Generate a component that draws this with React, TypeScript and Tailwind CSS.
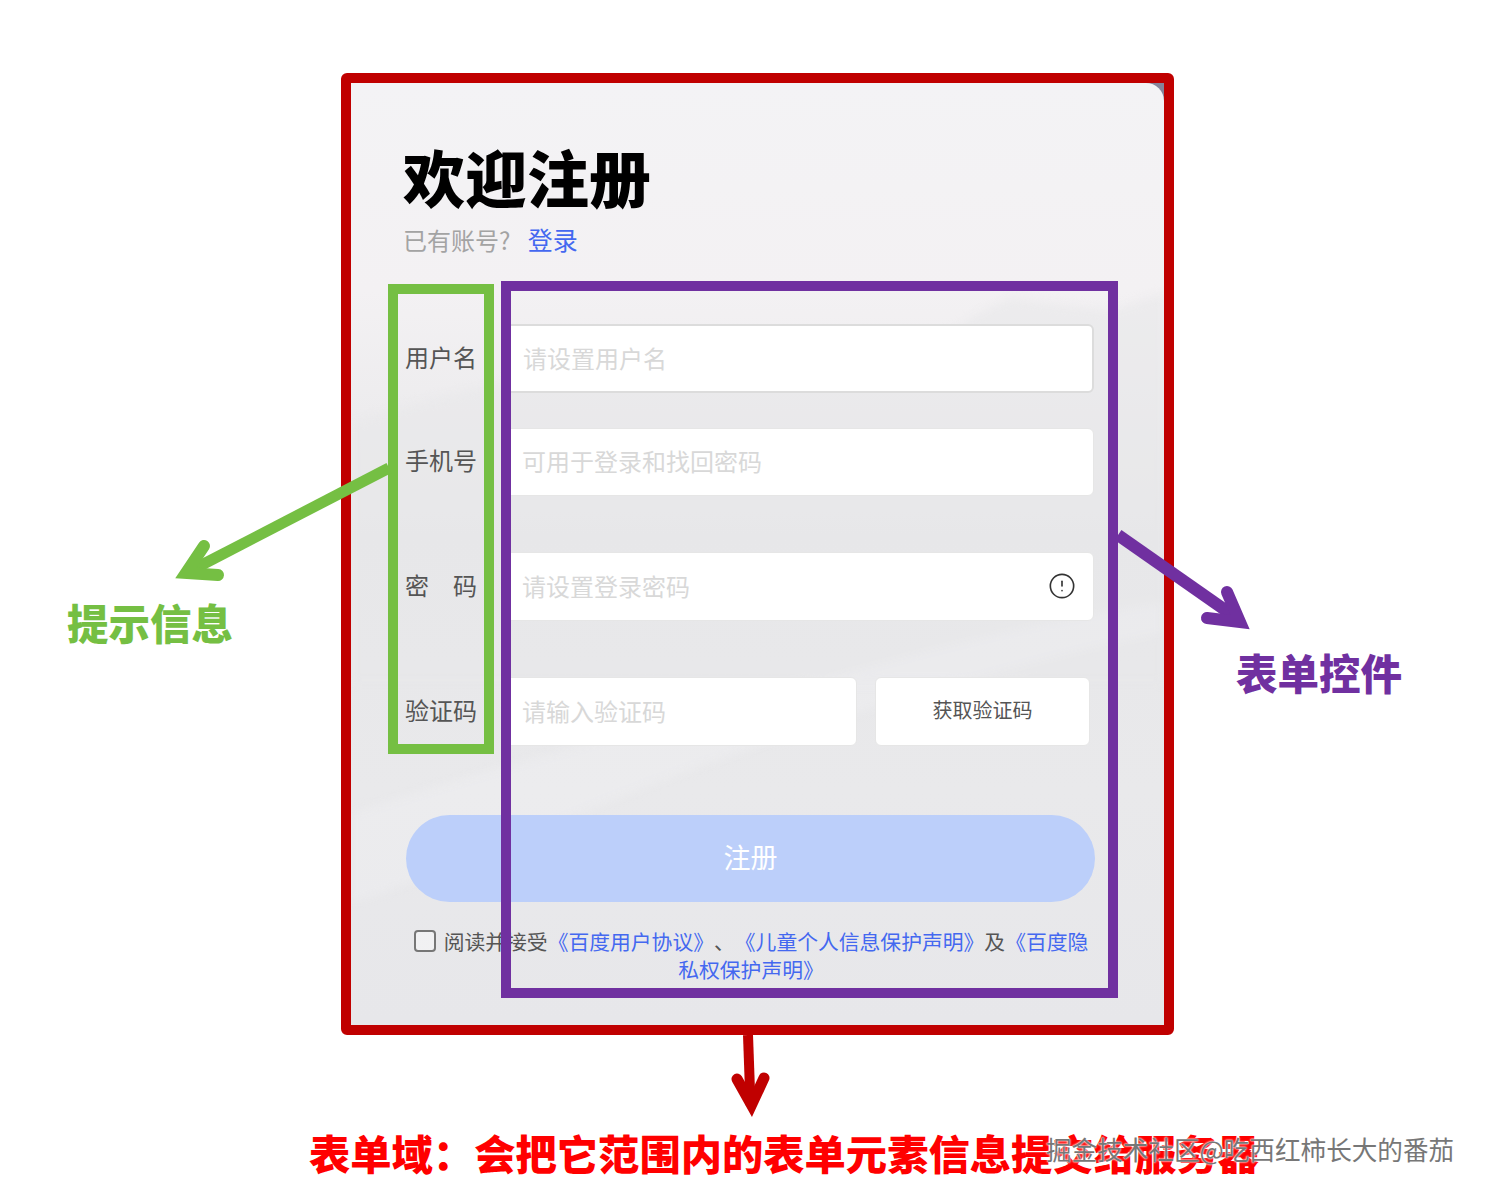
import { CircleAlert } from 'lucide-react';

const inputBox =
  "h-full rounded-[6px] bg-white pb-[3px] pl-[20px] text-[24px] text-[#333] outline-none placeholder:text-[#d8d8d8]";

function Row({ label, className, children }: { label: string; className: string; children: React.ReactNode }) {
  return (
    <div className={`flex items-stretch ${className}`}>
      <label className="flex w-[96px] shrink-0 items-center pb-[4px] text-[24px] text-[#555]">{label}</label>
      {children}
    </div>
  );
}

function Mountains() {
  return (
    <svg className="absolute inset-0 h-full w-full blur-[5px]" viewBox="0 0 813 942" fill="none">
      <path d="M0 340 C120 300 250 280 420 262 L600 250 L625 232 L660 215 L710 222 L760 228 L813 210 L813 600 L0 600 Z" fill="#e8e8ea" opacity="0.6" />
      <path d="M0 730 C120 690 240 660 380 620 C520 585 660 540 813 520 L813 550 C660 580 500 630 360 680 C220 730 100 790 0 820 Z" fill="#f1f1f3" opacity="0.4" />
    </svg>
  );
}

export default function App() {
  return (
    <div className="relative h-[1194px] w-[1486px] overflow-hidden bg-white pl-[341px] pt-[73px] font-['Noto_Sans_CJK_SC','Liberation_Sans',sans-serif]">
      {/* form panel with the red outline */}
      <div className="h-[962px] w-[833px] rounded-[6px] border-[10px] border-[#c00000] bg-[#85859a]">
        <div className="relative h-full overflow-hidden rounded-tr-[18px] bg-[linear-gradient(180deg,#f3f3f5_0%,#f3f1f3_22%,#e7e7e9_48%,#e9e9eb_75%,#e7e7ea_100%)]">
          <Mountains />
          <div className="relative pl-[52px] pt-[62px]">
            <h1 className="text-[62px] font-black leading-[62px] text-black">欢迎注册</h1>
            <p className="mt-[15px] text-[24px] leading-[34px] text-[#a3a3a3]">
              已有账号? <a className="ml-[12px] text-[25px] text-[#4468f0]">登录</a>
            </p>

            <div className="ml-[2px] w-[689px]">
              <Row label="用户名" className="mt-[67px] h-[69px]">
                <input className={`${inputBox} w-full border-2 border-[#dcdcdc]`} placeholder="请设置用户名" />
              </Row>
              <Row label="手机号" className="mt-[35px] h-[68px]">
                <input className={`${inputBox} w-full border border-[#e6e6e6]`} placeholder="可用于登录和找回密码" />
              </Row>
              <Row label="密　码" className="mt-[56px] h-[69px]">
                <div className="relative h-full w-full">
                  <input className={`${inputBox} w-full border border-[#e6e6e6]`} placeholder="请设置登录密码" />
                  <CircleAlert className="absolute right-[18px] top-[20px] text-[#333]" size={28} strokeWidth={1.4} />
                </div>
              </Row>
              <Row label="验证码" className="mt-[56px] h-[69px]">
                <input className={`${inputBox} w-[356px] border border-[#e6e6e6]`} placeholder="请输入验证码" />
                <button className="ml-[18px] w-[215px] rounded-[6px] border border-[#e6e6e6] bg-white pb-[3px] text-[20px] text-[#555]">
                  获取验证码
                </button>
              </Row>

              <button className="ml-px mt-[69px] h-[87px] w-[689px] rounded-[44px] bg-[#bccffa] pb-[2px] text-[27px] text-white">注册</button>

              <p className="mt-[25px] pl-[3px] text-center text-[20.8px] leading-[28px] text-[#555] [text-spacing-trim:space-all]">
                <input type="checkbox" className="mr-[8px] h-[22px] w-[22px] appearance-none rounded-[4px] border-2 border-[#767676] bg-white/40 align-[-2px]" />
                阅读并接受
                <a className="text-[#4468f0]">《百度用户协议》</a>、<a className="text-[#4468f0]">《儿童个人信息保护声明》</a>及
                <a className="text-[#4468f0]">《百度隐私权保护声明》</a>
              </p>
            </div>
          </div>
        </div>
      </div>

      {/* annotation outlines */}
      <div className="pointer-events-none absolute left-[388px] top-[284px] h-[470px] w-[106px] border-[10px] border-[#75bf43]" />
      <div className="pointer-events-none absolute left-[501px] top-[281px] h-[717px] w-[617px] border-[10px] border-[#7030a0]" />

      {/* annotation arrows */}
      <svg className="pointer-events-none absolute inset-0 h-full w-full" viewBox="0 0 1486 1194" fill="none">
        <path d="M389 468 L190 571" stroke="#75bf43" strokeWidth="11" />
        <path d="M204 546 L186 573 L218 575" stroke="#75bf43" strokeWidth="12" strokeLinecap="round" strokeMiterlimit="10" />
        <path d="M1118 535 L1238 619" stroke="#7030a0" strokeWidth="12" />
        <path d="M1227 592 L1240 622 L1207 618" stroke="#7030a0" strokeWidth="12" strokeLinecap="round" strokeMiterlimit="10" />
        <path d="M748 1035 L750.5 1105" stroke="#c00000" strokeWidth="10" />
        <path d="M737 1079 L751.5 1105 L764 1078" stroke="#c00000" strokeWidth="11" strokeLinecap="round" strokeMiterlimit="10" />
      </svg>

      {/* annotation captions */}
      <span className="absolute left-[67px] top-[592px] text-[41.5px] font-black leading-[60px] text-[#75bf43]">提示信息</span>
      <span className="absolute left-[1236px] top-[642px] text-[41.5px] font-black leading-[60px] text-[#7030a0]">表单控件</span>
      <span className="absolute left-[309px] top-[1122px] whitespace-nowrap text-[41.3px] font-black leading-[60px] text-[#ff0000]">
        {'表单域\uFF1A会把它范围内的表单元素信息提交给服务器'}
      </span>
      <span className="absolute left-[1046px] top-[1129px] whitespace-nowrap text-[25.6px] leading-[40px] text-[#777] [text-shadow:0_0_2px_#fff,0_0_2px_#fff]">
        掘金技术社区@吃西红柿长大的番茄
      </span>
    </div>
  );
}
